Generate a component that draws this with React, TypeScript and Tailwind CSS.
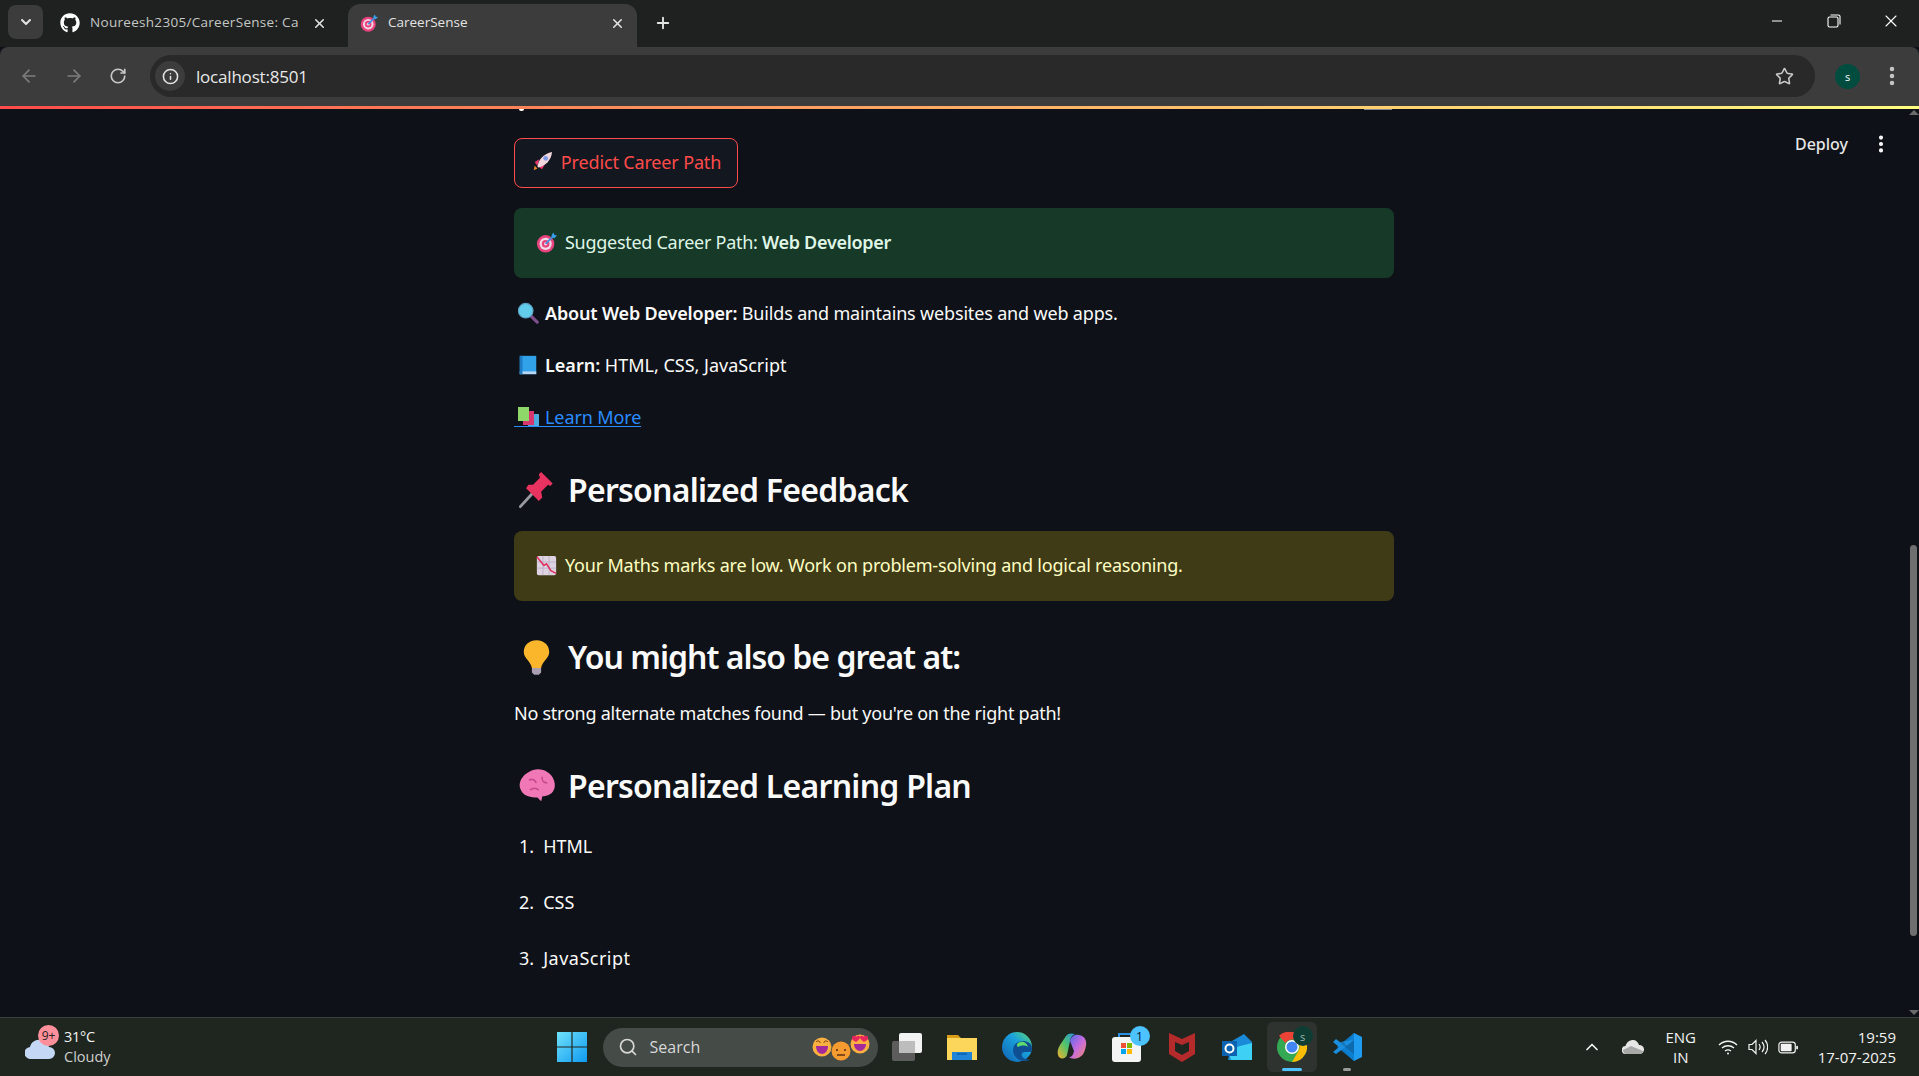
import { ArrowLeft, ArrowRight, ChevronDown, ChevronUp, EllipsisVertical, Info, Minus, Plus, RotateCw, Search, Star, X } from "lucide-react";
import { FaGithub } from "react-icons/fa";

function TargetEmoji({ className }: { className: string }) {
  return (
    <svg viewBox="0 0 24 24" className={className}>
      <circle cx="11" cy="13.5" r="10" fill="#e8437f" />
      <circle cx="11" cy="13.5" r="7" fill="#f3dbe6" />
      <circle cx="11" cy="13.5" r="4.4" fill="#e8437f" />
      <circle cx="11" cy="13.5" r="1.8" fill="#f3dbe6" />
      <path d="M11 13.5 20 4.5" stroke="#3f8fe0" strokeWidth="2" />
      <path d="M18 3l2-2.500 1 3 3 .5-3 3-3-1z" fill="#39a0ed" />
    </svg>
  );
}

function RocketEmoji() {
  return (
    <svg viewBox="0 0 24 24" className="w-[22px] h-[22px] shrink-0">
      <path d="M3 21l1-5 3 3z" fill="#f08a24" />
      <path d="M4 12l5-3-2 7zM12 20l3-5-7 2z" fill="#e8386f" />
      <path d="M7 17C8 9 14 3 23 1c-1 9-7 15-15 17z" fill="#f2d6de" />
      <circle cx="16" cy="8" r="2.600" fill="#7f9be8" />
    </svg>
  );
}

function SearchEmoji() {
  return (
    <svg viewBox="0 0 24 24" className="w-[22px] h-[22px] shrink-0">
      <path d="M14 14l8 8" stroke="#7d4f8c" strokeWidth="3.500" strokeLinecap="round" />
      <circle cx="9.500" cy="9.500" r="8" fill="#62cdea" stroke="#5d9fc0" strokeWidth="1.200" />
    </svg>
  );
}

function BookEmoji() {
  return (
    <svg viewBox="0 0 24 24" className="w-[22px] h-[22px] shrink-0">
      <path d="M3 2h18v20H3z" fill="#31a2ea" />
      <path d="M3 19h18v3H3z" fill="#b8d6f2" />
      <path d="M3 2h3v20H3z" fill="#1f7cc4" />
    </svg>
  );
}

function BooksEmoji() {
  return (
    <svg viewBox="0 0 24 24" className="w-[24px] h-[24px] shrink-0">
      <path d="M12 9h11v13H12z" fill="#4ea9dc" />
      <path d="M7 6h11v14H7z" fill="#d8366f" />
      <path d="M2 2h11v14H2z" fill="#8ed869" />
    </svg>
  );
}

function PinEmoji() {
  return (
    <svg viewBox="0 0 32 32" className="w-[37px] h-[37px] shrink-0">
      <path d="M2 30l10-11" stroke="#9a9aa2" strokeWidth="2.400" strokeLinecap="round" />
      <path d="M7 14l11 11 3-3-1-5 6-6 2 1 2-2L20 0l-2 2 1 3-6 6-4 0z" fill="#e8325f" />
    </svg>
  );
}

function BulbEmoji() {
  return (
    <svg viewBox="0 0 32 32" className="w-[37px] h-[37px] shrink-0">
      <path d="M16 1C9 1 5 6 5 11c0 6 6 8 7 14h8c1-6 7-8 7-14 0-5-4-10-11-10z" fill="#fbb62c" />
      <path d="M12 25h8v4l-2 2h-4l-2-2z" fill="#a99fb0" />
    </svg>
  );
}

function BrainEmoji() {
  return (
    <svg viewBox="0 0 32 32" className="w-[39px] h-[39px] shrink-0">
      <path d="M9 4c4-3 11-3 15 0 5 3 7 9 6 13-1 5-6 7-10 7l-1 4-3-3c-5 0-12-1-14-7C0 13 3 7 9 4z" fill="#f178b6" />
      <path d="M9 11c3-2 5 0 6 2M20 8c-1 3 1 5 4 5M10 19c2-2 5-2 7 0" stroke="#c44a8f" strokeWidth="1.300" fill="none" />
    </svg>
  );
}

function ChartEmoji() {
  return (
    <svg viewBox="0 0 24 24" className="w-[21px] h-[21px] shrink-0">
      <rect x="1" y="1" width="22" height="22" rx="2" fill="#ddd3e2" />
      <path d="M1 8h22M1 15h22M8 1v22M15 1v22" stroke="#b6a9bd" strokeWidth=".8" />
      <path d="M1 2l8 10 3-2 5 8 6 3" stroke="#e0315f" strokeWidth="1.800" fill="none" />
    </svg>
  );
}

function WindowsLogo() {
  return (
    <svg viewBox="0 0 30 30" className="w-[30px] h-[30px]">
      <defs>
        <linearGradient id="win" x1="0" y1="0" x2="1" y2="1">
          <stop offset="0" stopColor="#6fe1fb" />
          <stop offset="1" stopColor="#0f9af0" />
        </linearGradient>
      </defs>
      <path d="M0 0h14.400v14.400H0zM15.600 0H30v14.400H15.600zM0 15.600h14.400V30H0zM15.600 15.600H30V30H15.600z" fill="url(#win)" />
    </svg>
  );
}

function FaceEmoji({ kind }: { kind: "grin" | "flat" | "love" }) {
  return (
    <svg viewBox="0 0 20 20" className="w-[20px] h-[20px]">
      <circle cx="10" cy="10" r="9.500" fill={kind === "flat" ? "#f59b2f" : "#fbb040"} />
      {kind === "grin" && <path d="M4 9h12c0 5-3 8-6 8s-6-3-6-8z" fill="#a42a9c" />}
      {kind === "grin" && <path d="M4 5c2-2 4-1 4 1M12 6c0-2 2-3 4-1" stroke="#6a3a1a" fill="none" />}
      {kind === "flat" && <path d="M6 14h8M6 8v2M14 8v2" stroke="#5a3014" strokeWidth="1.600" />}
      {kind === "love" && <path d="M4 10h12c0 4-3 7-6 7s-6-3-6-7z" fill="#a42a9c" />}
      {kind === "love" && <path d="M2 3c2-2 4-1 4 0 1-1 3-2 4 0 1-2 3-1 4 0 0-1 2-2 4 0 1 2-2 4-4 5-1-1-3-2-4-4-1 2-3 3-4 4-2-1-5-3-4-5z" fill="#e8255f" />}
    </svg>
  );
}

function TaskView() {
  return (
    <svg viewBox="0 0 30 30" className="w-[30px] h-[30px]">
      <rect x="0" y="9" width="23" height="20" rx="2" fill="#5c5c5c" />
      <rect x="7" y="1" width="23" height="20" rx="2" fill="#f2f2f2" />
      <rect x="7" y="9" width="16" height="12" fill="#bdbdbd" />
    </svg>
  );
}

function FolderIcon() {
  return (
    <svg viewBox="0 0 30 30" className="w-[30px] h-[30px]">
      <path d="M0 3h11l3 3h16v4H0z" fill="#d99e16" />
      <path d="M0 6h30v22H0z" fill="#fcd65a" />
      <path d="M5 20h20v8H5z" fill="#1e84d8" />
      <path d="M10 22h10" stroke="#0f5ea6" strokeWidth="1.500" />
    </svg>
  );
}

function EdgeIcon() {
  return (
    <svg viewBox="0 0 30 30" className="w-[30px] h-[30px]">
      <defs>
        <linearGradient id="edge" x1="0" y1="1" x2="1" y2="0">
          <stop offset="0" stopColor="#1060b0" />
          <stop offset=".6" stopColor="#1aa0dd" />
          <stop offset="1" stopColor="#5fdb6c" />
        </linearGradient>
      </defs>
      <circle cx="15" cy="15" r="15" fill="url(#edge)" />
      <path d="M30 16c0-5-5-7-9-7-6 0-10 4-10 9 0 6 5 11 12 11 2 0 3 0 5-2-3 1-7 0-8-3-1-2 0-4 3-4h6c1 0 1-2 1-4z" fill="#0f4f94" />
      <path d="M16 15c3-2 8-2 10 0-1-4-4-6-8-5-3 1-4 3-2 5z" fill="#5fdb6c" />
    </svg>
  );
}

function CopilotIcon() {
  return (
    <svg viewBox="0 0 30 30" className="w-[30px] h-[30px]">
      <defs>
        <linearGradient id="cop1" x1="0" y1="1" x2="1" y2="0">
          <stop offset="0" stopColor="#f6b12c" />
          <stop offset=".5" stopColor="#4ec46a" />
          <stop offset="1" stopColor="#2d8fe8" />
        </linearGradient>
        <linearGradient id="cop2" x1="0" y1="0" x2="1" y2="1">
          <stop offset="0" stopColor="#4d6be8" />
          <stop offset=".5" stopColor="#c56be0" />
          <stop offset="1" stopColor="#f58a6a" />
        </linearGradient>
      </defs>
      <path d="M9 4c2-3 6-3 9-2-3 1-4 3-5 7l-3 14c-1 4-8 5-9 0-1-3 0-7 2-10z" fill="url(#cop1)" />
      <path d="M13 9c1-4 4-7 9-6 6 1 8 6 7 11-1 4-2 10-8 12-3 1-7 1-9-1 3 0 4-2 5-6z" fill="url(#cop2)" />
    </svg>
  );
}

function StoreIcon() {
  return (
    <svg viewBox="0 0 30 30" className="w-[30px] h-[30px]">
      <path d="M7 6V2h16v4" stroke="#2a8fe0" strokeWidth="2" fill="none" />
      <rect x="0" y="5" width="29" height="25" rx="3" fill="#f4f4f4" />
      <path d="M9 11h5v5H9z" fill="#f05033" />
      <path d="M15 11h5v5h-5z" fill="#7fba00" />
      <path d="M9 17h5v5H9z" fill="#00a4ef" />
      <path d="M15 17h5v5h-5z" fill="#ffb900" />
    </svg>
  );
}

function McAfeeIcon() {
  return (
    <svg viewBox="0 0 30 30" className="w-[30px] h-[30px]">
      <path d="M2 1l13 6 13-6v21L15 30 2 22z" fill="#b52a2a" />
      <path d="M8 10l7 3 7-3v9l-7 4-7-4z" fill="#1f2620" />
    </svg>
  );
}

function OutlookIcon() {
  return (
    <svg viewBox="0 0 30 30" className="w-[30px] h-[30px]">
      <path d="M10 9L22 2l8 8v18H6z" fill="#1a8ad8" />
      <path d="M6 18l12-4 12-3v17H9z" fill="#3fd0f5" />
      <rect x="0" y="9" width="15" height="15" fill="#0a62b0" />
      <circle cx="7.500" cy="16.500" r="4" fill="none" stroke="#fff" strokeWidth="2" />
    </svg>
  );
}

function ChromeIcon() {
  return (
    <svg viewBox="0 0 30 30" className="w-[30px] h-[30px]">
      <circle cx="15" cy="15" r="15" fill="#34a853" />
      <path d="M15 0a15 15 0 0 1 13 7.500H15a7.500 7.500 0 0 0-6.500 3.750L2 3.750A15 15 0 0 1 15 0z" fill="#ea4335" transform="translate(0 0)" />
      <path d="M28 7.500A15 15 0 0 1 15 30l6.500-11.250A7.500 7.500 0 0 0 15 7.500z" fill="#fbbc04" />
      <circle cx="15" cy="15" r="7" fill="#fff" />
      <circle cx="15" cy="15" r="5.500" fill="#4285f4" />
    </svg>
  );
}

function VsCodeIcon() {
  return (
    <svg viewBox="0 0 30 30" className="w-[30px] h-[30px]">
      <path d="M22 1l8 4v20l-8 4-12-12z" fill="#1f9cf0" />
      <path d="M22 1v28L5 15z" fill="#0b7ccd" opacity=".9" />
      <path d="M22 8L8 19l-4 3-3-2 6-5-6-5 3-3 4 3z" fill="#1a8fe0" />
      <path d="M22 8v14L7 10l3-2 5 6z" fill="#0f2b45" opacity=".25" />
    </svg>
  );
}

function TaskbarSlot({ children, active }: { children: React.ReactNode; active?: "on" | "open" }) {
  return (
    <div className={"relative w-[50px] h-[50px] flex items-center justify-center rounded-md " + (active === "on" ? "bg-[#2e332f]" : "")}>
      {children}
      {active === "on" && <div className="absolute bottom-[1px] left-[15px] w-[20px] h-[3px] rounded-full bg-[#4cc2ff]" />}
      {active === "open" && <div className="absolute bottom-[1px] left-[21px] w-[8px] h-[3px] rounded-full bg-[#9a9a9a]" />}
    </div>
  );
}

export default function App() {
  return (
    <div className="flex flex-col h-screen w-full overflow-hidden bg-[#0e1117] font-['Noto_Sans',sans-serif] text-[18px] leading-[32px] text-[#fafafa]">
      {/* Tab strip */}
      <div className="h-[47px] shrink-0 bg-[#1f2120] flex items-end pl-[8px] font-['Open_Sans',sans-serif] text-[13.500px] leading-none text-[#e3e3e3]">
        <div className="self-start mt-[5px] w-[35px] h-[34px] rounded-lg bg-[#3c3c3c] flex items-center justify-center">
          <ChevronDown className="w-[16px] h-[16px]" strokeWidth={3} />
        </div>
        <div className="w-[305px] h-[43px] flex items-center pl-[17px] pr-[21px] pb-[5px]">
          <FaGithub className="w-[20px] h-[20px] text-white shrink-0" />
          <span className="ml-[10px] whitespace-nowrap tracking-[0.3px] text-[#c4c7c5]">Noureesh2305/CareerSense: Ca</span>
          <X className="ml-auto w-[15px] h-[15px]" strokeWidth={2.500} />
        </div>
        <div className="w-[289px] h-[43px] rounded-t-xl bg-[#3c3c3c] flex items-center pl-[12px] pr-[12px] pb-[5px]">
          <TargetEmoji className="w-[18px] h-[18px] shrink-0" />
          <span className="ml-[10px]">CareerSense</span>
          <X className="ml-auto w-[15px] h-[15px]" strokeWidth={2.500} />
        </div>
        <Plus className="ml-[17px] mb-[15px] w-[18px] h-[18px]" strokeWidth={2.500} />
        <div className="ml-auto self-start flex items-center h-[42px] text-white">
          <Minus className="w-[16px] h-[16px] mr-[42px]" strokeWidth={1.500} />
          <svg viewBox="0 0 14 14" className="w-[14px] h-[14px] mr-[40px]" fill="none" stroke="currentColor" strokeWidth="1.100">
            <rect x="1" y="3" width="10" height="10" rx="1.500" />
            <path d="M3.500 1h8a1.500 1.500 0 0 1 1.500 1.500v8" />
          </svg>
          <X className="w-[20px] h-[20px] mr-[18px]" strokeWidth={1.300} />
        </div>
      </div>

      {/* Toolbar */}
      <div className="h-[59px] shrink-0 bg-[#3c3c3c] flex items-center rounded-t-lg pb-[1px] pl-[19px] font-['Open_Sans',sans-serif] text-[#c7c7c7]">
        <ArrowLeft className="w-[20px] h-[20px] text-[#7d7d7d]" />
        <ArrowRight className="ml-[25px] w-[20px] h-[20px] text-[#7d7d7d]" />
        <RotateCw className="ml-[25px] w-[18px] h-[18px]" strokeWidth={2.200} />
        <div className="ml-[23px] h-[42px] w-[1665px] rounded-full bg-[#292929] flex items-center pl-[5px] pr-[21px]">
          <div className="w-[30px] h-[30px] rounded-full bg-[#3c3c3c] flex items-center justify-center">
            <Info className="w-[17px] h-[17px] text-[#e3e3e3]" strokeWidth={2.200} />
          </div>
          <span className="ml-[11px] text-[17px] tracking-[-0.2px] leading-none text-[#e8e8e8]">localhost:8501</span>
          <Star className="ml-auto w-[19px] h-[19px]" strokeWidth={2} />
        </div>
        <div className="ml-[20px] w-[25px] h-[25px] rounded-full bg-[#004d40] flex items-center justify-center text-[11px] leading-none text-white">s</div>
        <EllipsisVertical className="ml-[20px] w-[24px] h-[24px]" strokeWidth={2.500} />
      </div>

      {/* Streamlit decoration */}
      <div className="h-[3px] shrink-0 bg-gradient-to-r from-[#ff4b4b] to-[#fffd80]" />

      {/* Page */}
      <div className="relative flex-1 min-h-0 flex">
        <div className="flex-1 pl-[514px]">
          <div className="w-[880px]">
            <div className="h-[3px] flex justify-between pl-[5px] pr-[2px]">
              <div className="w-[5px] h-[2px] bg-white rounded-b-full" />
              <div className="w-[28px] h-[1px] bg-[#8a8a8a]" />
            </div>

            <button className="mt-[26px] w-[224px] h-[50px] rounded-lg border border-[#ff4b4b] bg-[#13171f] flex items-center justify-center gap-[8px] pb-[2px] tracking-[-0.15px] text-[#ff4b4b]">
              <RocketEmoji />
              Predict Career Path
            </button>

            <div className="mt-[20px] h-[70px] rounded-lg bg-[#173928] flex items-center pl-[22px] gap-[8px] pb-[2px] tracking-[-0.28px] text-[#dff5e6]">
              <TargetEmoji className="w-[21px] h-[21px] shrink-0" />
              <span>Suggested Career Path: <span className="font-semibold">Web Developer</span></span>
            </div>

            <p className="mt-[19px] pl-[3px] flex items-center gap-[6px] tracking-[-0.17px]">
              <SearchEmoji />
              <span><span className="font-semibold">About Web Developer:</span> Builds and maintains websites and web apps.</span>
            </p>
            <p className="mt-[20px] pl-[3px] flex items-center gap-[6px]">
              <BookEmoji />
              <span><span className="font-semibold">Learn:</span> HTML, CSS, JavaScript</span>
            </p>
            <a className="relative mt-[20px] flex items-center w-fit gap-[5px] pl-[2px] tracking-[-0.1px] text-[#2a8cff]">
              <BooksEmoji />
              Learn More
              <span className="absolute left-0 right-0 bottom-[6px] h-[1.500px] bg-[#2a8cff]" />
            </a>

            <h2 className="mt-[32px] h-[50px] pl-[4px] flex items-center gap-[13px] text-[32px] leading-[50px] tracking-[-0.75px] font-semibold">
              <PinEmoji />
              Personalized Feedback
            </h2>

            <div className="mt-[16px] h-[70px] rounded-lg bg-[#3f3b17] flex items-center pl-[22px] gap-[8px] pb-[2px] tracking-[-0.2px] text-[#ffffc2]">
              <ChartEmoji />
              Your Maths marks are low. Work on problem-solving and logical reasoning.
            </div>

            <h2 className="mt-[31px] h-[50px] pl-[4px] flex items-center gap-[13px] text-[32px] leading-[50px] tracking-[-1px] font-semibold">
              <BulbEmoji />
              You might also be great at:
            </h2>
            <p className="mt-[15px] tracking-[-0.25px]">No strong alternate matches found — but you're on the right path!</p>

            <h2 className="mt-[32px] h-[50px] pl-[4px] flex items-center gap-[11px] text-[32px] leading-[50px] tracking-[-0.75px] font-semibold">
              <BrainEmoji />
              Personalized Learning Plan
            </h2>

            <ol className="mt-[19px] flex flex-col gap-[24px] pl-[5px]">
              <li className="flex gap-[9px]"><span>1.</span>HTML</li>
              <li className="flex gap-[9px]"><span>2.</span>CSS</li>
              <li className="flex gap-[9px]"><span>3.</span><span className="tracking-[0.5px]">JavaScript</span></li>
            </ol>
          </div>
        </div>

        {/* Deploy header */}
        <div className="absolute top-[20px] right-[27px] flex items-center gap-[22px] text-[16px] leading-[30px] text-[#e6e6e6]">
          <span className="font-medium">Deploy</span>
          <EllipsisVertical className="w-[22px] h-[22px] text-white" strokeWidth={2.500} />
        </div>

        {/* Scrollbar */}
        <div className="w-[10px] shrink-0 flex flex-col items-center pr-[1px]">
          <div className="mt-[1px] w-0 h-0 border-x-[5px] border-x-transparent border-b-[5px] border-b-[#6b6b6b]" />
          <div className="mt-[430px] w-[7px] h-[391px] rounded-full bg-[#6f6f6f]" />
          <div className="mt-auto mb-[2px] w-0 h-0 border-x-[5px] border-x-transparent border-t-[5px] border-t-[#6b6b6b]" />
        </div>
      </div>

      {/* Windows taskbar */}
      <div className="h-[59px] shrink-0 border-t border-[#3b403c] bg-[#1f2620] flex items-center font-['Open_Sans',sans-serif] text-[14.500px] leading-[20px] text-[#f2f2f2]">
        <div className="relative ml-[25px] w-[30px] h-[30px]">
          <svg viewBox="0 0 30 20" className="absolute bottom-[3px] left-0 w-[30px] h-[20px]">
            <path d="M6 20a6 6 0 0 1-1-12C6 3 11 0 16 1c5 1 7 4 8 7a6 6 0 0 1 0 12z" fill="#c4d7f5" />
          </svg>
          <div className="absolute -top-[7px] left-[13px] w-[21px] h-[21px] rounded-full bg-[#ff8f9b] flex items-center justify-center text-[12px] leading-none text-[#1f1f1f]">9+</div>
        </div>
        <div className="ml-[9px] flex flex-col">
          <span className="tracking-[-0.3px]">31°C</span>
          <span className="text-[#cfcfcf]">Cloudy</span>
        </div>

        <div className="ml-[446px]"><WindowsLogo /></div>

        <div className="ml-[16px] w-[275px] h-[39px] rounded-full bg-[#454b47] flex items-center pl-[15px] pr-[8px] text-[16px] text-[#d8d8d8]">
          <Search className="w-[20px] h-[20px]" strokeWidth={2} />
          <span className="ml-[12px]">Search</span>
          <div className="ml-auto flex items-center -space-x-[1px]">
            <FaceEmoji kind="grin" />
            <div className="mt-[8px]"><FaceEmoji kind="flat" /></div>
            <div className="-mt-[6px]"><FaceEmoji kind="love" /></div>
          </div>
        </div>

        <div className="ml-[4px] flex items-center gap-[5px]">
          <TaskbarSlot><TaskView /></TaskbarSlot>
          <TaskbarSlot><FolderIcon /></TaskbarSlot>
          <TaskbarSlot><EdgeIcon /></TaskbarSlot>
          <TaskbarSlot><CopilotIcon /></TaskbarSlot>
          <TaskbarSlot>
            <StoreIcon />
            <div className="absolute top-[4px] right-[2px] w-[20px] h-[20px] rounded-full bg-[#4cc2ff] flex items-center justify-center text-[13px] leading-none text-[#10222e]">1</div>
          </TaskbarSlot>
          <TaskbarSlot><McAfeeIcon /></TaskbarSlot>
          <TaskbarSlot><OutlookIcon /></TaskbarSlot>
          <TaskbarSlot active="on">
            <ChromeIcon />
            <div className="absolute top-[4px] right-[4px] w-[20px] h-[20px] rounded-full bg-[#0f3d33] flex items-center justify-center text-[11px] leading-none text-[#9ab5ad]">s</div>
          </TaskbarSlot>
          <TaskbarSlot active="open"><VsCodeIcon /></TaskbarSlot>
        </div>

        <div className="ml-auto flex items-center pr-[23px] text-[15px]">
          <ChevronUp className="w-[20px] h-[20px]" strokeWidth={2} />
          <svg viewBox="0 0 22 14" className="ml-[20px] w-[22px] h-[14px]">
            <path d="M4 14a4 4 0 0 1-.5-8C4.500 2 8 0 11 0c3 0 5 2 6 5a4.500 4.500 0 0 1 1 9z" fill="#e6e6e6" />
            <path d="M1 10l8-4 12 5c-.500 2-2 3-3 3H4a4 4 0 0 1-3-4z" fill="#a8a8a8" />
          </svg>
          <div className="ml-[12px] w-[50px] flex flex-col items-center">
            <span>ENG</span>
            <span>IN</span>
          </div>
          <svg viewBox="0 0 20 16" className="ml-[12px] w-[20px] h-[16px]" fill="none" stroke="#f2f2f2" strokeWidth="1.400">
            <path d="M1 6c5-5 13-5 18 0M4 9c3.500-3 8.500-3 12 0M7 12c2-1.500 4-1.500 6 0" />
            <circle cx="10" cy="14.500" r="1" fill="#f2f2f2" stroke="none" />
          </svg>
          <svg viewBox="0 0 20 16" className="ml-[10px] w-[20px] h-[16px]" fill="none" stroke="#f2f2f2" strokeWidth="1.200">
            <path d="M1 5.500v5h3l4 4v-13l-4 4z" />
            <path d="M11 5c1.500 2 1.500 4 0 6M14 3c2.500 3 2.500 7 0 10M17 1c3.500 4 3.500 10 0 14" />
          </svg>
          <svg viewBox="0 0 22 14" className="ml-[10px] w-[20px] h-[13px]">
            <rect x="1" y="1" width="18" height="12" rx="3" fill="none" stroke="#f2f2f2" strokeWidth="1.300" />
            <rect x="3" y="3" width="12" height="8" rx="1" fill="#f2f2f2" />
            <rect x="20" y="5" width="2" height="4" rx="1" fill="#f2f2f2" />
          </svg>
          <div className="ml-[20px] flex flex-col items-end">
            <span>19:59</span>
            <span>17-07-2025</span>
          </div>
        </div>
      </div>
    </div>
  );
}
